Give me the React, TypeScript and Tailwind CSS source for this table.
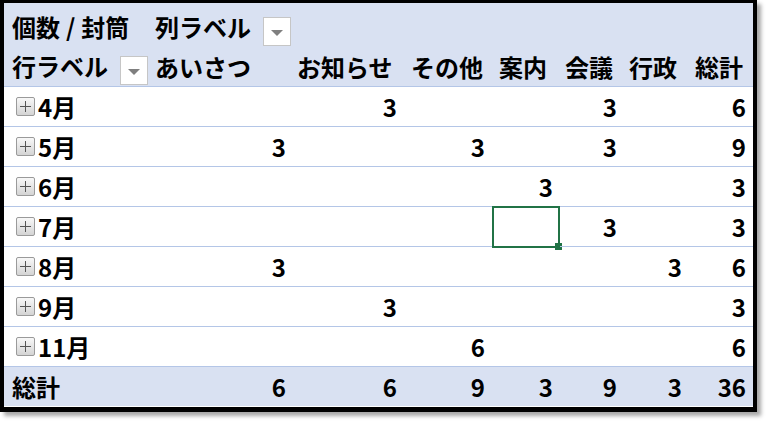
import React from "react";

const font = { fontFamily: '"Noto Sans CJK JP", "Noto Sans", sans-serif' };

const headers = ["あいさつ", "お知らせ", "その他", "案内", "会議", "行政", "総計"];
// left padding for each column header (headers are left aligned, like Excel)
const headerPad = ["pl-[5px]", "pl-[4px]", "pl-[7px]", "pl-[7px]", "pl-[5px]", "pl-[5px]", "pl-[6px]"];

const rows: { label: string; values: (number | null)[] }[] = [
  { label: "4月", values: [null, 3, null, null, 3, null, 6] },
  { label: "5月", values: [3, null, 3, null, 3, null, 9] },
  { label: "6月", values: [null, null, null, 3, null, null, 3] },
  { label: "7月", values: [null, null, null, null, 3, null, 3] },
  { label: "8月", values: [3, null, null, null, null, 3, 6] },
  { label: "9月", values: [null, 3, null, null, null, null, 3] },
  { label: "11月", values: [null, null, 6, null, null, null, 6] },
];

const totals = [6, 6, 9, 3, 9, 3, 36];

function Dropdown() {
  return (
    <div className="shrink-0 w-[28px] h-[29px] bg-white border border-[#c6c6c6] flex items-center justify-center">
      <div className="mt-[3px] w-0 h-0 border-l-[6px] border-r-[6px] border-t-[6px] border-l-transparent border-r-transparent border-t-[#7f7f7f]" />
    </div>
  );
}

function PlusBox() {
  return (
    <div className="relative shrink-0 w-[19px] h-[19px] rounded-[2px] border border-[#9a9a9a] bg-gradient-to-b from-[#f8f8f8] to-[#d4d4d4]">
      <div className="absolute left-[3px] top-[8px] w-[11px] h-[1px] bg-[#555]" />
      <div className="absolute left-[8px] top-[3px] w-[1px] h-[11px] bg-[#555]" />
    </div>
  );
}

export default function App() {
  return (
    <div className="w-[766px] h-[421px] bg-white">
      <div
        className="w-[757px] h-[412px] border-l-4 border-r-4 border-t-[3px] border-b-[5px] border-black shadow-[4px_4px_4px_rgba(0,0,0,0.35)] text-black font-bold text-[24px] leading-none"
        style={font}
      >
        <div className="grid grid-cols-[146px_143px_111px_88px_68px_64px_65px_64px]">
          {/* header row 1 */}
          <div className="h-[44px] bg-[#d9e1f2] flex items-end pb-[8px] pl-2 whitespace-nowrap">
            個数<span className="mx-[6px]">/</span>封筒
          </div>
          <div className="col-span-7 h-[44px] bg-[#d9e1f2] flex items-end pb-[1px] pl-[5px] gap-3">
            <span className="mb-[7px]">列ラベル</span>
            <Dropdown />
          </div>

          {/* header row 2 */}
          <div className="h-[40px] bg-[#d9e1f2] border-b border-[#b4c6e7] flex items-end pb-[1px] pl-2 gap-3">
            <span className="mb-[7px]">行ラベル</span>
            <Dropdown />
          </div>
          {headers.map((h, i) => (
            <div
              key={h}
              className={`h-[40px] bg-[#d9e1f2] border-b border-[#b4c6e7] flex items-center whitespace-nowrap ${headerPad[i]}`}
            >
              {h}
            </div>
          ))}

          {/* data rows */}
          {rows.map((r) => (
            <React.Fragment key={r.label}>
              <div className="h-[40px] border-b border-[#b4c6e7] flex items-center pl-3 gap-[3px]">
                <PlusBox />
                <span>{r.label}</span>
              </div>
              {r.values.map((v, i) => (
                <div
                  key={i}
                  className="relative h-[40px] border-b border-[#b4c6e7] flex items-center justify-end pr-[7px]"
                >
                  {v ?? ""}
                  {r.label === "7月" && i === 3 && (
                    <div className="absolute left-0 -top-[1px] w-[68px] h-[42px] border-2 border-[#217346]">
                      <div className="absolute -right-[4px] -bottom-[4px] w-[7px] h-[7px] bg-[#217346]" />
                    </div>
                  )}
                </div>
              ))}
            </React.Fragment>
          ))}

          {/* total row */}
          <div className="h-[39px] bg-[#d9e1f2] flex items-center pl-2">総計</div>
          {totals.map((t, i) => (
            <div key={i} className="h-[39px] bg-[#d9e1f2] flex items-center justify-end pr-[7px]">
              {t}
            </div>
          ))}
        </div>
      </div>
    </div>
  );
}
